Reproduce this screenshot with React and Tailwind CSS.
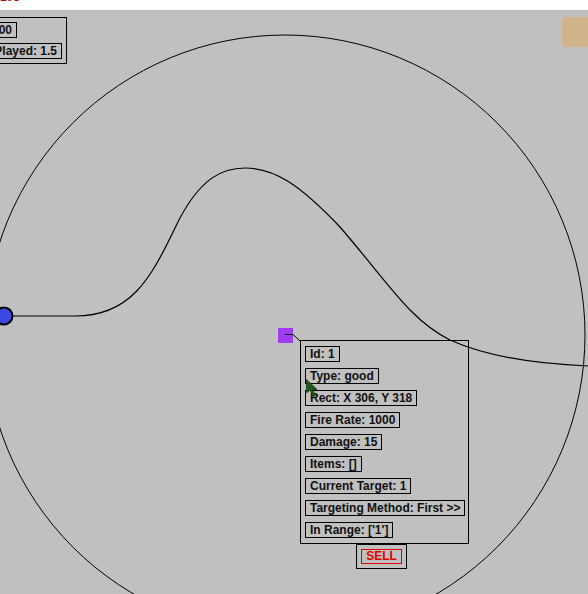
import React from 'react';

const font = { fontFamily: '"Liberation Sans", Arial, sans-serif' };

const towerInfo = [
  'Id: 1',
  'Type: good',
  'Rect: X 306, Y 318',
  'Fire Rate: 1000',
  'Damage: 15',
  'Items: []',
  'Current Target: 1',
  'Targeting Method: First >>',
  "In Range: ['1']",
];

const Label = ({ children, className = '' }) => (
  <div className={`border border-black px-1 leading-[14px] text-[12px] font-bold text-[#111] whitespace-nowrap ${className}`}>
    {children}
  </div>
);

export default function App() {
  return (
    <div className="relative w-[588px] h-[594px] overflow-hidden bg-white flex flex-col" style={font}>
      {/* top strip with clipped debug text */}
      <div className="relative h-[10px] shrink-0 bg-white">
        <span className="absolute left-0 top-[-9px] text-[12px] font-bold text-[#a01010] leading-[12px]">195</span>
      </div>

      {/* game canvas */}
      <div className="relative flex-1 bg-[#c0c0c0]">
        <svg className="absolute left-0 top-[-10px]" width="588" height="594" viewBox="0 0 588 594">
          <circle cx="285" cy="335" r="300" fill="none" stroke="#000" strokeWidth="1" />
          <path
            d="M0,316 L75,316 C130,316 150,280 175,228 C200,175 225,168 245,168 C275,168 300,185 340,227 C390,285 410,320 450,340 C490,358 540,364 588,366"
            fill="none"
            stroke="#000"
            strokeWidth="1.2"
          />
          <circle cx="4" cy="316" r="8.5" fill="#3a48e6" stroke="#000" strokeWidth="2" />
          <rect x="278" y="328" width="15" height="15" fill="#a03cf0" />
          <polyline points="285,334.5 293,334.5 300,341" fill="none" stroke="#000" strokeWidth="1" />
        </svg>

        {/* stats HUD, clipped by the left edge */}
        <div className="absolute left-0 top-[7px] w-[67px] flex justify-end">
          <div className="shrink-0 border border-black p-1 flex flex-col items-end gap-[5px]">
            <Label className="mr-[45px]">Money: 100</Label>
            <Label>Time Played: 1.5</Label>
          </div>
        </div>

        {/* shop tile */}
        <div className="absolute right-0 top-[7px] w-[26px] h-[30px] bg-[#d2b48c]" />

        {/* tower info panel */}
        <div className="absolute left-[300px] top-[330px] flex flex-col items-center">
          <div className="w-[169px] h-[204px] border border-black pt-[5px] pl-1 flex flex-col items-start gap-[6px]">
            {towerInfo.map((t) => (
              <Label key={t}>{t}</Label>
            ))}
          </div>
          <div className="ml-[-6px] mt-0 h-[25px] border border-black p-1">
            <div className="h-[15px] border border-[#e00000] px-1 leading-[13px] text-[12px] font-bold text-[#e00000]">SELL</div>
          </div>
        </div>

        {/* mouse cursor */}
        <svg className="absolute left-[306px] top-[369px]" width="12" height="19" viewBox="0 0 12 19">
          <polygon points="0.5,0.5 0.5,14 4,11 7,17.5 9.5,16.5 6.5,10.5 11,10.5" fill="#1d5a1d" stroke="#0f3a0f" strokeWidth="0.8" />
        </svg>
      </div>
    </div>
  );
}
